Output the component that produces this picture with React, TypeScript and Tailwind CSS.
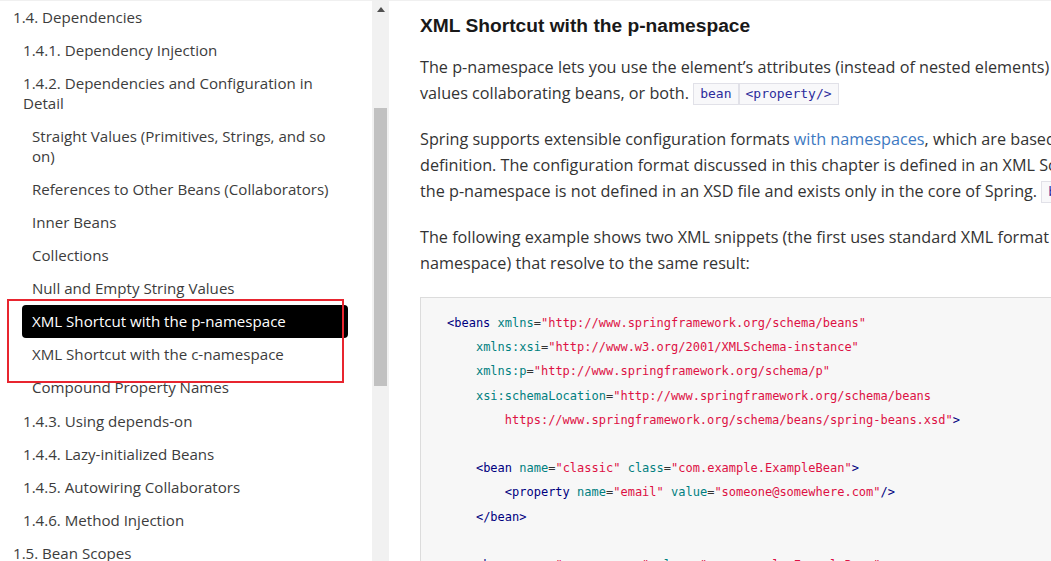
import React from "react";

type NavItem = { lines: string[]; level: 1 | 2 | 3; active?: boolean };

const nav: NavItem[] = [
  { lines: ["1.4. Dependencies"], level: 1 },
  { lines: ["1.4.1. Dependency Injection"], level: 2 },
  { lines: ["1.4.2. Dependencies and Configuration in", "Detail"], level: 2 },
  { lines: ["Straight Values (Primitives, Strings, and so", "on)"], level: 3 },
  { lines: ["References to Other Beans (Collaborators)"], level: 3 },
  { lines: ["Inner Beans"], level: 3 },
  { lines: ["Collections"], level: 3 },
  { lines: ["Null and Empty String Values"], level: 3 },
  { lines: ["XML Shortcut with the p-namespace"], level: 3, active: true },
  { lines: ["XML Shortcut with the c-namespace"], level: 3 },
  { lines: ["Compound Property Names"], level: 3 },
  { lines: ["1.4.3. Using depends-on"], level: 2 },
  { lines: ["1.4.4. Lazy-initialized Beans"], level: 2 },
  { lines: ["1.4.5. Autowiring Collaborators"], level: 2 },
  { lines: ["1.4.6. Method Injection"], level: 2 },
  { lines: ["1.5. Bean Scopes"], level: 1 },
];

const indent = {
  1: "ml-[3px]",
  2: "ml-[13px]",
  3: "ml-[22px]",
};

// code tokens: t = tag, a = attribute, s = string, p = plain
type Tok = [string, "t" | "a" | "s" | "p"];

const tokColor = {
  t: "text-[#000080]",
  a: "text-[#008080]",
  s: "text-[#dd1144]",
  p: "text-[#333333]",
};

const code: Tok[][] = [
  [["<beans", "t"], [" ", "p"], ["xmlns", "a"], ["=", "p"], ['"http://www.springframework.org/schema/beans"', "s"]],
  [["    ", "p"], ["xmlns:xsi", "a"], ["=", "p"], ['"http://www.w3.org/2001/XMLSchema-instance"', "s"]],
  [["    ", "p"], ["xmlns:p", "a"], ["=", "p"], ['"http://www.springframework.org/schema/p"', "s"]],
  [["    ", "p"], ["xsi:schemaLocation", "a"], ["=", "p"], ['"http://www.springframework.org/schema/beans', "s"]],
  [["        ", "p"], ['https://www.springframework.org/schema/beans/spring-beans.xsd"', "s"], [">", "t"]],
  [],
  [["    ", "p"], ["<bean", "t"], [" ", "p"], ["name", "a"], ["=", "p"], ['"classic"', "s"], [" ", "p"], ["class", "a"], ["=", "p"], ['"com.example.ExampleBean"', "s"], [">", "t"]],
  [["        ", "p"], ["<property", "t"], [" ", "p"], ["name", "a"], ["=", "p"], ['"email"', "s"], [" ", "p"], ["value", "a"], ["=", "p"], ['"someone@somewhere.com"', "s"], ["/>", "t"]],
  [["    ", "p"], ["</bean>", "t"]],
  [],
  [["    ", "p"], ["<bean", "t"], [" ", "p"], ["name", "a"], ["=", "p"], ['"p-namespace"', "s"], [" ", "p"], ["class", "a"], ["=", "p"], ['"com.example.ExampleBean"', "s"]],
  [["        ", "p"], ["p:email", "a"], ["=", "p"], ['"someone@somewhere.com"', "s"], ["/>", "t"]],
];

function Pill({ children }: { children: React.ReactNode }) {
  return (
    <code className="inline-block border border-[#e1e1e8] bg-[#f8f8fa] px-[6px] text-[13px] leading-[20px] text-[#2c2c9c] font-['DejaVu_Sans_Mono',monospace] align-[1px]">
      {children}
    </code>
  );
}

export default function App() {
  return (
    <div className="relative flex h-[561px] w-[1051px] overflow-hidden border-t border-[#f0f0f0] bg-white">
      {/* sidebar toc */}
      <div className="w-[372px] shrink-0 font-['Open_Sans',sans-serif] text-[15.1px] text-[#3c3c3c]">
        <ul className="-mt-px mr-[24px]">
          {nav.map((item, i) => (
            <li
              key={i}
              className={`${indent[item.level]} whitespace-nowrap rounded-[4px] px-[10px] py-[6.56px] leading-[20px] ${
                item.active ? "bg-black text-white" : ""
              }`}
            >
              {item.lines.map((l, j) => (
                <div key={j}>{l}</div>
              ))}
            </li>
          ))}
        </ul>
      </div>

      {/* scrollbar */}
      <div className="flex w-[17px] shrink-0 flex-col items-center bg-[#f1f1f1]">
        <div className="flex h-[17px] w-full items-center justify-center">
          <svg width="8" height="5" viewBox="0 0 8 5">
            <polygon points="4,0 8,5 0,5" fill="#505050" />
          </svg>
        </div>
        <div className="mt-[90px] h-[278px] w-[13px] bg-[#c1c1c1]" />
      </div>

      {/* main content */}
      <div className="min-w-0 flex-1 pl-[31px] pt-[13px] font-['Open_Sans',sans-serif] text-[16.2px] leading-[26px] text-[#333333]">
        <h4 className="font-['Liberation_Sans',Arial,sans-serif] text-[19.2px] font-bold leading-[24px] text-[#191919]">
          XML Shortcut with the p-namespace
        </h4>

        <p className="mt-[16px] whitespace-nowrap">
          The p-namespace lets you use the element’s attributes (instead of nested elements) to describe your property
          <br />
          values collaborating beans, or both. <Pill>bean</Pill>
          <Pill>&lt;property/&gt;</Pill>
        </p>

        <p className="mt-[20px] whitespace-nowrap">
          Spring supports extensible configuration formats <span className="text-[#3d79c2]">with namespaces</span>, which are based on an XML Schema
          <br />
          definition. The configuration format discussed in this chapter is defined in an XML Schema document. However,
          <br />
          the p-namespace is not defined in an XSD file and exists only in the core of Spring. <Pill>beans</Pill>
        </p>

        <p className="mt-[20px] whitespace-nowrap">
          The following example shows two XML snippets (the first uses standard XML format and the second uses the p-
          <br />
          namespace) that resolve to the same result:
        </p>

        <div className="mt-[21px] w-[900px] border-l border-t border-[#dcdcdc] bg-[#f7f7f7] pb-6 pl-[26px] pt-[13px]">
          <pre className="font-['DejaVu_Sans_Mono',monospace] text-[12px] leading-[24.2px]">
            {code.map((line, i) => (
              <div key={i} className="h-[24.2px] whitespace-pre">
                {line.map(([text, kind], j) => (
                  <span key={j} className={tokColor[kind]}>
                    {text}
                  </span>
                ))}
              </div>
            ))}
          </pre>
        </div>
      </div>

      {/* red annotation frame */}
      <div className="absolute left-[7px] top-[298px] h-[84px] w-[337px] border-2 border-[#e8252f]" />
    </div>
  );
}
